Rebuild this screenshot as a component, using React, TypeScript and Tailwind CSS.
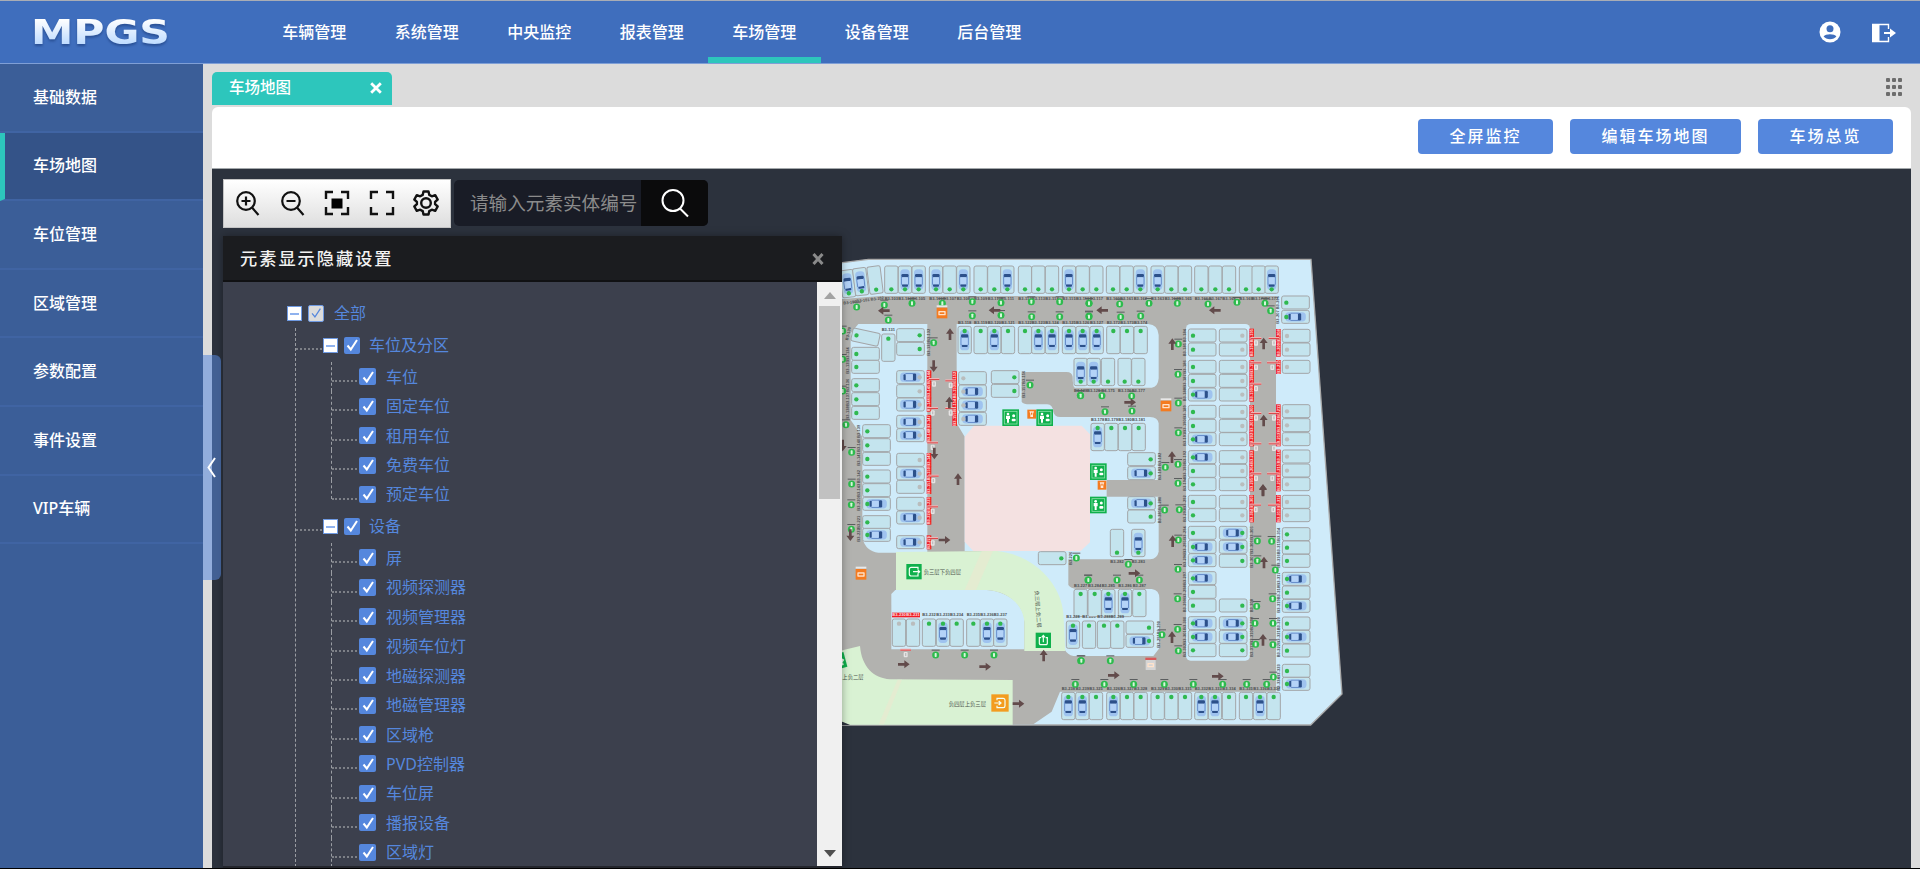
import React from 'react';

const FONT = "font-['Noto_Sans','Noto_Sans_CJK_SC',sans-serif]";

/* ---------- navigation data ---------- */

const NAV = ['车辆管理', '系统管理', '中央监控', '报表管理', '车场管理', '设备管理', '后台管理'];
const SIDE = ['基础数据', '车场地图', '车位管理', '区域管理', '参数配置', '事件设置', 'VIP车辆'];
const TREE = [
  { name: '车位及分区', items: ['车位', '固定车位', '租用车位', '免费车位', '预定车位'] },
  {
    name: '设备',
    items: ['屏', '视频探测器', '视频管理器', '视频车位灯', '地磁探测器', '地磁管理器', '区域枪', 'PVD控制器', '车位屏', '播报设备', '区域灯'],
  },
];

/* ---------- car park map data ----------
   Four tiles, each in thirds of a pixel. A slot is "x y kind":
   t/b/l/r = side of the status dot, upper case = occupied, g = magnetic sensor. */

type Tile = {
  dx: number;
  dy: number;
  slots: string;
  lamps: string;
  gates: string;
  arrows: string;
};

const TILES: Tile[] = [
  {
    dx: 0,
    dy: 0,
    slots:
      '33 60 B -7,72 54 B -7,115 49 b -7,164 48 b,205 48 B,246 48 B,298 48 B,339 48 b,380 48 B,432 48 b,473 48 b,512 48 B,565 48 b,605 48 b,646 48 b,697 48 B,738 48 b,779 48 b,' +
      '384 229 T,432 229 t,473 229 T,514 229 t,565 229 t,605 229 T,646 229 T,697 229 T,738 229 T,780 229 T,732 325 B,771 325 B,' +
      '65 242 l 12,155 252 t,200 236 r,200 277 r,65 292 l,65 331 l,65 386 l,65 428 l,65 469 l,98 524 l,98 566 l,98 607 l,98 660 l,98 701 l,' +
      '200 362 Rg,200 404 rg,200 444 Rg,200 496 Rg,200 536 Rg,200 610 rg,200 651 Rg,200 691 rg,386 365 lg,386 405 Lg,386 446 Lg,386 487 Lg,484 362 r,484 403 r',
    lamps:
      '80 171,163 165,175 210,246 160,337 160,427 155,513 158,427 197,513 196,604 155,605 200,689 155,689 200,777 160,777 198,311 278,600 405,751 436,48 524,65 607,65 702,38 243,38 328,38 423',
    gates: '312 400,308 487,308 590,310 690,362 404,362 487',
    arrows: '162 182 180,494 181 180,360 253 -90,311 348 90,358 458 -90,313 610 90,384 688 -90,38 586 90',
  },
  {
    dx: 750,
    dy: 0,
    slots:
      '79 48 b,120 48 b,161 48 B,213 48 B,254 48 b,295 48 b,344 48 b,386 48 b,427 48 b,478 48 b,516 48 b,555 48 B,' +
      '80 229 t,121 229 t,162 229 t,64 325 b,114 325 b,155 325 b,33 520 T,74 520 t,115 520 t,156 520 t,143 608 r,143 650 R,' +
      '325 237 l,325 279 l,325 331 l,325 373 l,325 414 L,325 466 l,325 508 l,325 548 L,325 602 L,325 643 l,325 683 l,' +
      '418 237 rg,418 279 rg,418 331 rg,418 373 rg,418 414 rg,418 466 rg,418 508 rg,418 548 rg,418 602 rg,418 643 rg,418 683 rg,' +
      '605 138 l,605 181 L,607 238 lg,607 279 lg,607 331 lg,607 464 lg,607 506 lg,607 548 lg,607 600 lg,607 642 lg,607 683 lg',
    lamps:
      '27 160,27 200,119 162,122 201,207 160,182 198,292 160,384 162,471 157,555 160,572 182,295 282,294 373,295 459,295 548,294 643,294 700,256 652,66 437,155 438,75 485,156 483,2 437',
    gates: '528 277,528 350,528 414,528 502,528 593,528 683,582 277,577 350,582 502,582 593,577 683',
    arrows: '67 181 180,405 181 180,277 283 -90,551 281 -90,551 512 -90,549 720 -90,276 622 -90,150 457 0',
  },
  {
    dx: 0,
    dy: 720,
    slots:
      '98 22 L,98 77 l,98 115 L,200 22 rg,200 63 Rg,200 137 Rg,625 185 r,732 298 t,709 393 T,757 393 t,' +
      '187 387 tg,229 387 tg,277 387 t,319 387 T,360 387 t,410 387 t,451 387 T,491 387 T,695 607 T,737 607 T',
    lamps: '64 44,64 118,739 204,774 270,317 495,404 495,492 495,752 512,736 583',
    gates: '308 62,308 157,227 492',
    arrows: '343 150 0,61 135 90,221 523 0,465 530 0,641 497 -90,565 641 0',
  },
  {
    dx: 750,
    dy: 720,
    slots:
      '143 20 R,143 60 r,91 118 b,155 118 B,24 298 t,65 298 T,115 298 T,158 298 t,52 393 t,92 393 t,138 393 r,138 433 R,' +
      '325 16 l,325 56 l,325 109 l,325 151 L,325 191 L,325 245 L,325 286 l,325 327 l,325 380 L,325 421 L,325 461 l,' +
      '418 16 rg,418 56 rg,418 109 R,418 151 R,418 193 r,418 327 r,418 380 R,418 421 R,418 461 r,' +
      '607 16 lg,607 56 lg,607 113 l,607 153 l,607 193 l,607 247 L,607 288 l,607 328 L,607 381 l,607 421 L,607 462 l,607 523 l,607 562 L,' +
      '28 607 t,80 607 T,121 607 t,162 607 t,213 607 t,254 607 t,295 607 t,344 607 T,385 607 T,427 607 t,478 607 t,520 607 T,561 607 t',
    lamps:
      '254 60,298 59,145 223,25 270,111 270,178 270,295 150,294 238,293 326,293 418,295 482,246 434,4 512,91 512,73 583,161 583,253 583,340 583,428 583,500 583,560 583,580 561,532 153,575 154,532 212,586 240,578 326,530 349,525 400,579 400,527 463,579 464',
    gates: '527 57,580 57',
    arrows: '278 154 -90,552 218 -90,549 450 -90,276 442 -90,163 250 0,101 556 0,413 559 0,549 2 -90',
  },
];

const rows = (s: string) => s.split(',').map((r) => r.split(' '));

function Slot({ spec, index }: { spec: string[]; index: number }) {
  const [x, y] = [Number(spec[0]), Number(spec[1])];
  const side = spec[2][0].toLowerCase();
  const car = spec[2][0] !== side;
  const magnetic = spec[2][1] === 'g';
  const rot = Number(spec[3] ?? 0);
  const vertical = side === 't' || side === 'b';
  const w = vertical ? 40 : 83;
  const h = vertical ? 82 : 39;
  const dot = { t: [20, 14], b: [20, 70], l: [14, 20], r: [69, 20] }[side] as number[];
  const label = { t: [20, -12], b: [20, 97], l: [-12, 20], r: [97, 20] }[side] as number[];
  const fill = magnetic ? '#b9bdbd' : '#2fb94f';
  return (
    <g transform={`translate(${x} ${y}) rotate(${rot} ${w / 2} ${h / 2})`}>
      <rect width={w} height={h} rx="6" fill="#c4e4ee" stroke="#a3a5a7" strokeWidth="3" />
      {car && (
        <g transform={`translate(${w / 2} ${h / 2}) rotate(${vertical ? 0 : 90})`}>
          <rect x="-14" y="-31" width="28" height="62" rx="11" fill="#9fc3ef" />
          <rect x="-11" y="-17" width="22" height="10" rx="4" fill="#2c508a" />
          <rect x="-9" y="14" width="18" height="7" rx="3" fill="#2c508a" />
          <rect x="-12" y="-10" width="2.5" height="25" fill="#5d85c4" />
          <rect x="9.5" y="-10" width="2.5" height="25" fill="#5d85c4" />
          <rect x="-9" y="-7" width="18" height="21" rx="3" fill="#b4d3f8" />
        </g>
      )}
      <circle cx={dot[0]} cy={dot[1]} r="6.5" fill={fill} />
      <g transform={`translate(${label[0]} ${label[1]}) rotate(${vertical ? 0 : -90})`}>
        {magnetic && <rect x="-21" y="-7" width="42" height="14" fill="#f01c24" />}
        <text textAnchor="middle" y="4.5" fontSize="12" fontWeight="700" textLength="40" fill={magnetic ? '#ffe1e1' : '#4a4d50'}>
          {`B3-${100 + index}`}
        </text>
      </g>
    </g>
  );
}

function Lamp({ x, y }: { x: number; y: number }) {
  return (
    <g transform={`translate(${x} ${y})`}>
      <rect x="-12" y="-16" width="24" height="3" fill="#5b5e5f" />
      <circle r="10.5" fill="#2dbb4d" />
      <rect x="-3" y="-6" width="6" height="12" rx="2" fill="#d9f5dd" />
    </g>
  );
}

function Gate({ x, y }: { x: number; y: number }) {
  return (
    <g transform={`translate(${x} ${y})`}>
      <rect x="-16" y="-16" width="32" height="7" fill="#f0b5b5" />
      <rect x="-16" y="-13" width="32" height="3" fill="#d8494c" />
      <rect x="-6" y="-6" width="12" height="16" rx="3" fill="#e6e4e4" />
      <rect x="-2" y="-3" width="4" height="9" fill="#bdbdbd" />
    </g>
  );
}

function Restroom({ x, y }: { x: number; y: number }) {
  return (
    <g transform={`translate(${x} ${y})`}>
      <rect x="-25" y="-25" width="50" height="50" fill="#0fb04c" />
      <rect x="-19" y="-19" width="38" height="38" fill="none" stroke="#8be0aa" strokeWidth="2.5" />
      <g fill="#fff">
        <circle cx="-8" cy="-11" r="4" />
        <path d="M-14 -6h12v10h-3v11h-6V4h-3z" />
        <circle cx="9" cy="-6" r="4.5" />
        <rect x="3" y="3" width="12" height="8" rx="3" />
      </g>
    </g>
  );
}

function Machine({ x, y, s = 32, top = false, fill = '#f47b20' }: { x: number; y: number; s?: number; top?: boolean; fill?: string }) {
  return (
    <g transform={`translate(${x} ${y})`}>
      {top && <rect x={-s / 2} y={-s / 2 - 7} width={s} height="6" fill="#e8e8e8" />}
      <rect x={-s / 2} y={-s / 2} width={s} height={s} fill={fill} />
      <rect x={-s / 2 + 5} y="-6" width={s - 10} height="13" rx="2" fill="#ffe2cb" />
      <rect x={-s / 2 + 9} y="-2" width={s - 18} height="5" fill={fill} />
    </g>
  );
}

/* Narrow pay machine: a tapered white pictogram on orange. */
function PayPoint({ x, y }: { x: number; y: number }) {
  return (
    <g transform={`translate(${x} ${y})`}>
      <rect x="-13" y="-13" width="26" height="27" fill="#f47b20" />
      <path d="M-7 -8H7L4 0V9H-4V0Z" fill="#ffe9d8" />
      <rect x="-2" y="-4" width="4" height="6" fill="#f47b20" />
    </g>
  );
}

function Passage({ x, y, s, fill, rot = 0, kind = 'out' }: { x: number; y: number; s: number; fill: string; rot?: number; kind?: 'out' | 'in' | 'up' }) {
  const d = {
    out: 'M12 -7V-13H-8Q-14 -13 -14 -7V7Q-14 13 -8 13H12V7M-3 0H17M11 -6L17 0L11 6',
    in: 'M-9 -8V-14H10Q15 -14 15 -8V8Q15 14 10 14H-9V8M-17 0H3M-4 -6L3 0L-4 6',
    up: 'M-7 -8H-12V9Q-12 13 -8 13H8Q12 13 12 9V-8H7M0 6V-14M-5 -9L0 -15L5 -9',
  }[kind];
  return (
    <g transform={`translate(${x} ${y}) rotate(${rot})`}>
      <rect x={-s / 2} y={-s / 2} width={s} height={s} fill={fill} />
      <path d={d} fill="none" stroke="#f4fff4" strokeWidth="3.6" />
    </g>
  );
}

function ParkingMap() {
  return (
    <svg viewBox="212 169 1699 698" className="block h-[698px] w-[1699px] font-['Liberation_Sans','Noto_Sans_CJK_SC',sans-serif]">
      <g transform="translate(830 250) scale(0.33333)">
        <path d="M0 45L37 38L115 28H1443L1536 1332L1442 1425H0Z" fill="#cfebfa" stroke="#a9a9a9" strokeWidth="4" />
        <path d="M0 150L150 138H1338V1325H690L665 1385L610 1423H0Z" fill="#b2b2af" />
        <g fill="#cfebfa">
          <path d="M85 222H292V908H145Q108 905 97 865V560L62 510V250Z" />
          <path d="M380 222H955Q984 224 986 255V385Q984 411 965 413H735Q728 412 728 380Q726 366 710 366H575V455Q580 463 600 463H652Q668 464 670 485Q674 501 690 501H960Q984 502 986 520V690H830V740H986V905Q982 926 960 928H715V1005Q722 1016 740 1017H965Q988 1020 988 1045V1195L970 1218H730Q712 1214 705 1200L690 1110L500 903H404V560L380 520Z" />
          <rect x="1068" y="222" width="192" height="1010" rx="14" />
          <path d="M184 1032L196 1020H470C540 1024 583 1070 583 1110V1198H184Z" />
        </g>
        <path d="M404 560L432 527H755L780 553V877L752 903H430L404 875Z" fill="#f4e1e1" />
        <g fill="#d9f2d3">
          <path d="M198 906L500 903C620 915 695 1010 700 1090L706 1203H583V1115C578 1060 530 1024 470 1020H198Z" />
          <path d="M0 1210L90 1188C95 1250 130 1284 180 1288L548 1290V1424H60L37 1416H0Z" />
        </g>
        <g fill="#e4ecd1">
          <path d="M455 904L489 903L438 1020H404Z" />
          <path d="M203 1289H216L162 1423H146Z" />
        </g>
        <path d="M37 1415L60 1425H0V1415Z" fill="#2c323d" />
        {TILES.map((t, ti) => (
          <g key={ti} transform={`translate(${t.dx} ${t.dy})`}>
            {rows(t.slots).map((s, i) => (
              <Slot key={i} spec={s} index={ti * 60 + i} />
            ))}
            {rows(t.lamps).map(([x, y], i) => (
              <Lamp key={i} x={+x} y={+y} />
            ))}
            {rows(t.gates).map(([x, y], i) => (
              <Gate key={i} x={+x} y={+y} />
            ))}
            {rows(t.arrows).map(([x, y, a], i) => (
              <path key={i} transform={`translate(${x} ${y}) rotate(${a})`} d="M-17 -4H2V-12L18 0L2 12V4H-17Z" fill="#624b4b" />
            ))}
          </g>
        ))}
        <Machine x={336} y={189} top />
        <PayPoint x={605} y={492} />
        <Machine x={1008} y={468} top />
        <PayPoint x={816} y={705} />
        <Machine x={93} y={973} top />
        <Machine x={962} y={1245} s={30} fill="#d5d5d5" />
        <rect x="946" y="1223" width="33" height="7" fill="#d8595b" />
        <Restroom x={542} y={503} />
        <Restroom x={644} y={503} />
        <Restroom x={805} y={665} />
        <Restroom x={805} y={765} />
        <Passage x={252} y={965} s={46} fill="#0fb04c" />
        <Passage x={640} y={1171} s={46} fill="#0fb04c" kind="up" />
        <Passage x={24} y={1234} s={46} fill="#0fb04c" rot={-15} />
        <Passage x={510} y={1359} s={52} fill="#f39c1f" kind="in" />
        <g fill="#4c554c" fontSize="16">
          <text x="281" y="973">负三层下负四层</text>
          <text x="356" y="1369">负四层上负三层</text>
          <text x="37" y="1288">上负二层</text>
          <text transform="translate(614 1022) rotate(86)">负三层上负二层</text>
        </g>
      </g>
    </svg>
  );
}

/* ---------- small pieces ---------- */

function Check({ muted = false, wide = false }: { muted?: boolean; wide?: boolean }) {
  return (
    <span
      className={`flex h-[17px] shrink-0 items-center justify-center rounded-[2px] ${wide ? 'w-[17px]' : 'w-4'} ${
        muted ? 'border border-[#6f9ae2] bg-[#dcdcdc]' : 'bg-[#5587dd]'
      }`}
    >
      <svg viewBox="0 0 16 16" className="h-4 w-4" fill="none" stroke={muted ? '#5587dd' : '#fff'} strokeWidth={muted ? 1.4 : 2}>
        <path d="M3.5 8.5L6.8 12.5L13 3" />
      </svg>
    </span>
  );
}

function Minus() {
  return (
    <span className="flex h-[15px] w-[15px] shrink-0 items-center justify-center border border-[#6f9ae2] bg-white">
      <span className="h-[2px] w-[9px] bg-[#8fb2ee]" />
    </span>
  );
}

function Tree() {
  return (
    <div className="flex-1 overflow-hidden pt-4 text-base leading-none text-[#5587dd]">
      <div className="flex h-[30px] items-center pl-[64px]">
        <span className="pt-[1px]"><Minus /></span>
        <span className="ml-[6px]"><Check muted /></span>
        <span className="ml-[10px]">全部</span>
      </div>
      <div className="ml-[72px] border-l border-dashed border-[#9a9da3]">
        {TREE.map((g, gi) => (
          <div key={g.name}>
            <div className="flex h-[34px] items-center">
              <span className="mt-2 w-[26px] border-t-2 border-dotted border-[#7d8087]" />
              <span className="ml-[1px] pt-[1px]"><Minus /></span>
              <span className="ml-[6px]"><Check /></span>
              <span className="ml-[9px]">{g.name}</span>
            </div>
            <div className="ml-[35px]">
              {g.items.map((it, i) => (
                <div key={it} className="flex h-[29.45px] items-center">
                  <span
                    className={`w-[26px] self-start border-l border-dashed border-[#9a9da3] ${
                      gi === 0 && i === g.items.length - 1 ? 'h-[19px]' : 'h-full'
                    }`}
                  >
                    <span className="mt-[18px] block border-t-2 border-dotted border-[#7d8087]" />
                  </span>
                  <span className="ml-[2px]"><Check wide /></span>
                  <span className="ml-[10px]">{it}</span>
                </div>
              ))}
            </div>
          </div>
        ))}
      </div>
    </div>
  );
}

function Header() {
  return (
    <header className="flex h-16 shrink-0 border-t border-b border-t-[#a9adb5] border-b-[#7f9fd6] bg-[#3f6ebd]">
      <div className="w-[258px] shrink-0 pt-[6px] pl-[30px]">
        <svg viewBox="0 0 150 50" className="h-[50px] w-[150px]" aria-label="MPGS">
          <defs>
            <linearGradient id="logo" x1="0" y1="12" x2="0" y2="37" gradientUnits="userSpaceOnUse">
              <stop offset="0" stopColor="#ffffff" />
              <stop offset="1" stopColor="#bfdcff" />
            </linearGradient>
          </defs>
          <text
            x="1"
            y="37"
            fontSize="34"
            fontWeight="700"
            textLength="139"
            lengthAdjust="spacingAndGlyphs"
            fill="url(#logo)"
            className="font-['DejaVu_Sans',sans-serif] drop-shadow-[0_2px_1px_rgba(20,50,110,0.5)]"
          >
            MPGS
          </text>
        </svg>
      </div>
      <nav className="flex">
        {NAV.map((n, i) => (
          <div
            key={n}
            className={`flex w-[112.5px] items-center justify-center border-b-[6px] text-base font-medium text-white ${
              i === 4 ? 'border-[#2dc6bc]' : 'border-transparent'
            }`}
          >
            <span className="pt-[5px]">{n}</span>
          </div>
        ))}
      </nav>
      <div className="ml-auto flex items-center gap-[30px] pr-[23px]">
        <svg viewBox="0 0 22 22" className="h-[22px] w-[22px]">
          <circle cx="11" cy="11" r="10.5" fill="#fff" />
          <circle cx="11" cy="7.8" r="3.5" fill="#3f6ebd" />
          <path d="M4.6 15.6C6.5 12.6 15.5 12.6 17.4 15.6C15 19 7 19 4.6 15.6Z" fill="#3f6ebd" />
        </svg>
        <svg viewBox="0 0 26 20" className="mt-[2px] h-5 w-[26px]" fill="none">
          <path d="M1 1H8.5V19H1Z" fill="#fff" />
          <path d="M1 1.5H17.5V6M17.5 14V18.5H1" stroke="#fff" strokeWidth="1.4" />
          <path d="M13 10H20" stroke="#fff" strokeWidth="2" />
          <path d="M19 5.5L25 10L19 14.5Z" fill="#fff" />
        </svg>
      </div>
    </header>
  );
}

function Sidebar() {
  return (
    <aside className="w-[203px] shrink-0 bg-[#3b5e98]">
      {SIDE.map((s, i) => (
        <div
          key={s}
          className={`flex h-[68.6px] items-center border-b-2 border-b-[#4064a3] pb-[1px] text-base font-medium text-white ${
            i === 1 ? 'border-l-[5px] border-l-[#2dc6bc] bg-[#345388] pl-[28px]' : 'pl-[33px]'
          }`}
        >
          {s}
        </div>
      ))}
    </aside>
  );
}

function Toolbar() {
  return (
    <div className="flex gap-[3px]">
      <div className="flex h-[49px] w-[228px] items-center border border-[#c4c4c4] bg-gradient-to-b from-white to-[#dedede] pb-[2px] pl-[10px]">
        <svg viewBox="0 0 28 28" className="mr-[16.6px] h-7 w-7" fill="none" stroke="#111" strokeWidth="2.2">
          <circle cx="12" cy="12" r="8.8" />
          <path d="M18 18.5L24.5 26M7.5 12H16.5M12 7.5V16.5" />
        </svg>
        <svg viewBox="0 0 28 28" className="mr-[16.6px] h-7 w-7" fill="none" stroke="#111" strokeWidth="2.2">
          <circle cx="12" cy="12" r="8.8" />
          <path d="M18 18.5L24.5 26M7.5 12H16.5" />
        </svg>
        <svg viewBox="0 0 28 28" className="mr-[16.6px] h-7 w-7" fill="none" stroke="#111" strokeWidth="2.4">
          <path d="M3 10V3H10M18 3H25V10M25 18V25H18M10 25H3V18" />
          <path d="M8.5 9.5H19.5V19.5H8.5Z" fill="#000" stroke="none" />
        </svg>
        <svg viewBox="0 0 28 28" className="mr-[16.6px] h-7 w-7" fill="none" stroke="#111" strokeWidth="2.4">
          <path d="M3 10V3H10M18 3H25V10M25 18V25H18M10 25H3V18" />
        </svg>
        <svg viewBox="0 0 28 28" className="h-7 w-7" fill="none" stroke="#111" strokeWidth="2.4" strokeLinejoin="round">
          <circle cx="14" cy="14" r="4.8" />
          <path d="M11.5 2.5H16.5L17.3 5.9L19.8 7.3L23.2 6.2L25.7 10.5L23.1 12.8V15.2L25.7 17.5L23.2 21.8L19.8 20.7L17.3 22.1L16.5 25.5H11.5L10.7 22.1L8.2 20.7L4.8 21.8L2.3 17.5L4.9 15.2V12.8L2.3 10.5L4.8 6.2L8.2 7.3L10.7 5.9Z" />
        </svg>
      </div>
      <div className="mt-[1px] flex h-[46px] w-[254px] overflow-hidden rounded-[5px] bg-[#191c26]">
        <div className="flex w-[187px] items-center overflow-hidden pb-[1px] pl-[16px] text-[18.6px] whitespace-nowrap text-[#8b8b8b]">
          请输入元素实体编号
        </div>
        <div className="flex flex-1 items-center justify-center bg-[#0b0b0c]">
          <svg viewBox="0 0 30 30" className="h-[30px] w-[30px]" fill="none" stroke="#fff" strokeWidth="2">
            <circle cx="13" cy="12.5" r="10.5" />
            <path d="M20 20.5L28 28.5" />
          </svg>
        </div>
      </div>
    </div>
  );
}

function VisibilityPanel() {
  return (
    <section className="mt-2 flex h-[632px] w-[619px] flex-col bg-[#3c404d] shadow-[0_0_8px_rgba(0,0,0,0.35)]">
      <div className="flex h-[46px] shrink-0 items-center justify-between border-b-2 border-[#101113] bg-[#1b1c1f] pt-[1px] pr-[18px] pl-[17px]">
        <h2 className="text-[17.2px] font-medium tracking-[2px] text-[#f2f2f2]">元素显示隐藏设置</h2>
        <svg viewBox="0 0 12 12" className="h-3 w-3" stroke="#8a8a8a" strokeWidth="3">
          <path d="M1.5 1L10.5 11M10.5 1L1.5 11" />
        </svg>
      </div>
      <div className="flex min-h-0 flex-1 border-b-2 border-[#24262d]">
        <Tree />
        <div className="flex w-[25px] shrink-0 flex-col items-center bg-[#f0f0f0]">
          <svg viewBox="0 0 12 7" className="mt-[10px] h-[7px] w-3"><path d="M0 7L6 0L12 7Z" fill="#a3a3a3" /></svg>
          <div className="mt-[7px] h-[193px] w-[21px] bg-[#c1c1c1]" />
          <svg viewBox="0 0 12 7" className="mt-auto mb-[9px] h-[7px] w-3"><path d="M0 0L6 7L12 0Z" fill="#4f4f4f" /></svg>
        </div>
      </div>
    </section>
  );
}

export default function App() {
  return (
    <div className={`relative flex h-[869px] w-[1920px] flex-col overflow-hidden bg-[#dcdcdc] ${FONT}`}>
      <Header />
      <div className="flex min-h-0 flex-1">
        <Sidebar />
        <main className="flex flex-1 flex-col pr-[9px] pl-[9px]">
          <div className="flex h-[43px] shrink-0 items-start justify-between pt-2">
            <div className="flex h-[33px] w-[180px] items-center justify-between rounded-t-[5px] bg-[#2dc6bc] pr-[10px] pb-[1px] pl-[17px] text-[15.5px] font-medium text-white">
              <span>车场地图</span>
              <svg viewBox="0 0 12 12" className="h-3 w-3" stroke="#fff" strokeWidth="2.8">
                <path d="M1.2 1.2L10.8 10.8M10.8 1.2L1.2 10.8" />
              </svg>
            </div>
            <div className="mt-[6px] mr-2 grid h-[18px] w-[18px] grid-cols-3 content-between justify-items-center">
              {Array.from({ length: 9 }, (_, i) => (
                <span key={i} className="h-1 w-1 rounded-[1px] bg-[#6d6d6d]" />
              ))}
            </div>
          </div>
          <div className="flex h-[62px] shrink-0 justify-end gap-[17px] rounded-t-[6px] border-b border-[#a3a8ab] bg-white pt-3 pr-[18px]">
            <button className="h-[35px] w-[135px] rounded-[4px] bg-[#5587dd] pb-[1px] text-base font-medium tracking-[2px] text-white">全屏监控</button>
            <button className="h-[35px] w-[171px] rounded-[4px] bg-[#5587dd] pb-[1px] text-base font-medium tracking-[2px] text-white">编辑车场地图</button>
            <button className="h-[35px] w-[135px] rounded-[4px] bg-[#5587dd] pb-[1px] text-base font-medium tracking-[2px] text-white">车场总览</button>
          </div>
          <div className="relative min-h-0 flex-1 overflow-hidden bg-[#2c323d]">
            <ParkingMap />
            <div className="absolute top-[10px] left-[11px]">
              <Toolbar />
              <VisibilityPanel />
            </div>
          </div>
        </main>
      </div>
      <div className="h-[1px] shrink-0 bg-black" />
      <div className="absolute top-[355px] left-[203px] flex h-[225px] w-[18px] items-center justify-center rounded-r-[6px] bg-[#5587dd]/55 pr-[2px]">
        <svg viewBox="0 0 9 21" className="h-[21px] w-[9px]" fill="none" stroke="#fff" strokeWidth="2">
          <path d="M8 1L1.5 10.5L8 20" />
        </svg>
      </div>
    </div>
  );
}
